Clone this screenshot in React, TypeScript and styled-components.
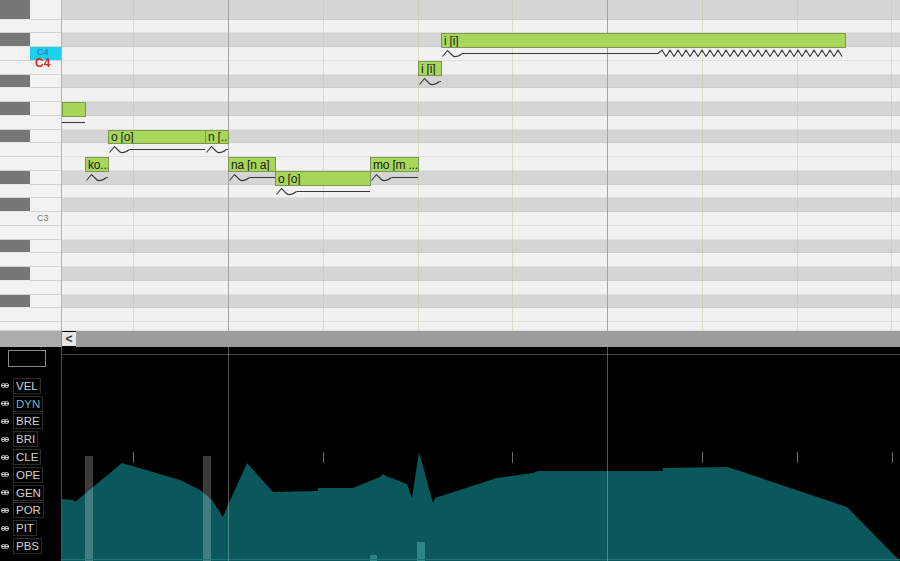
import React from "react";
import styled, { createGlobalStyle } from "styled-components";

const GlobalStyle = createGlobalStyle`
  html, body { margin: 0; padding: 0; background: #000; }
  body { font-family: "Liberation Sans", Arial, sans-serif; }
  * { box-sizing: border-box; }
`;

const PIANO_H = 331;
const KEY_W = 62;

const NAMES = [
  "D#4", "D4", "C#4", "C4", "B3", "A#3", "A3", "G#3", "G3", "F#3", "F3", "E3",
  "D#3", "D3", "C#3", "C3", "B2", "A#2", "A2", "G#2", "G2", "F#2", "F2", "E2",
];

type Row = { name: string; black: boolean; top: number; h: number };

const ROWS: Row[] = NAMES.map((name, i) => {
  const top = i === 0 ? 0 : Math.floor(20 + (i - 1) * 13.75);
  const next = Math.min(PIANO_H, Math.floor(20 + i * 13.75));
  return { name, black: name.includes("#"), top, h: next - top };
});
const rowOf = (n: string) => ROWS.find((r) => r.name === n)!;

type NoteDef = { x: number; w: number; row: string; text: string; squiggle: boolean; lineEnd?: number; vib?: [number, number] };

const NOTES: NoteDef[] = [
  { x: 62, w: 23, row: "G#3", text: "", squiggle: false },
  { x: 85, w: 23, row: "E3", text: "ko...", squiggle: true },
  { x: 108, w: 97, row: "F#3", text: "o [o]", squiggle: true },
  { x: 205, w: 23, row: "F#3", text: "n [...", squiggle: true },
  { x: 228, w: 47, row: "E3", text: "na [n a]", squiggle: true },
  { x: 275, w: 95, row: "D#3", text: "o [o]", squiggle: true },
  { x: 370, w: 48, row: "E3", text: "mo [m ...", squiggle: true },
  { x: 418, w: 23, row: "B3", text: "i [i]", squiggle: true },
  { x: 441, w: 404, row: "C#4", text: "i [i]", squiggle: true, lineEnd: 658, vib: [658, 843] },
];

const BAR_LINES = [228, 607];
const BEAT_LINES = [133, 323, 418, 512, 702, 797, 891];
const TICKS = [133, 323, 512, 702, 797, 892];

const PARAMS = ["VEL", "DYN", "BRE", "BRI", "CLE", "OPE", "GEN", "POR", "PIT", "PBS"];

const CURVE: [number, number][] = [
  [62, 499], [73, 500], [75, 502], [122, 463], [180, 480], [200, 490], [212, 500], [223, 517],
  [228, 505], [247, 463], [273, 492], [318, 491], [318, 488], [353, 488], [380, 477], [383, 474],
  [386, 476], [407, 484], [412, 498], [419, 452], [433, 503], [435, 498], [497, 478], [533, 473],
  [538, 471], [663, 471], [663, 468], [727, 467], [743, 472], [847, 507], [900, 561],
];

/* ---------- layout ---------- */

const Screen = styled.div`
  width: 900px;
  height: 561px;
  overflow: hidden;
  display: flex;
  flex-direction: column;
  background: #000;
`;

const PianoRoll = styled.div`
  height: ${PIANO_H}px;
  display: flex;
  flex-shrink: 0;
  overflow: hidden;
`;

const Keyboard = styled.div`
  width: ${KEY_W}px;
  position: relative;
  display: flex;
  flex-direction: column;
  border-right: 1px solid #b4b4b4;
  background: #f2f2f2;
`;

const KeyRow = styled.div<{ $h: number }>`
  height: ${(p) => p.$h}px;
  display: flex;
  flex-shrink: 0;
`;

const BlackPart = styled.div<{ $black: boolean }>`
  width: 30px;
  background: ${(p) => (p.$black ? "#777777" : "#f2f2f2")};
  border-bottom: 1px solid ${(p) => (p.$black ? "#e8e8e8" : "#d2d2d2")};
`;

const WhitePart = styled.div<{ $hl?: boolean }>`
  flex: 1;
  background: ${(p) => (p.$hl ? "#1ccfec" : "#f2f2f2")};
  border-bottom: 1px solid #d2d2d2;
  display: flex;
  align-items: ${(p) => (p.$hl ? "flex-start" : "center")};
  padding-left: 7px;
  padding-top: ${(p) => (p.$hl ? "1px" : "0")};
  font-size: 9px;
  color: ${(p) => (p.$hl ? "#1d73b0" : "#7a7a7a")};
  line-height: 1;
`;

const CurrentNote = styled.div`
  position: absolute;
  left: 35px;
  top: 57px;
  font-size: 12px;
  font-weight: bold;
  color: #d42a2a;
  line-height: 1;
`;

const Grid = styled.div`
  flex: 1;
  position: relative;
  display: flex;
  flex-direction: column;
`;

const GridRow = styled.div<{ $h: number; $black: boolean }>`
  height: ${(p) => p.$h}px;
  flex-shrink: 0;
  background: ${(p) => (p.$black ? "#d5d5d5" : "#f1f1f1")};
  border-bottom: 1px solid ${(p) => (p.$black ? "#cdcdcd" : "#e0e0e0")};
`;

const VLine = styled.div<{ $bar: boolean }>`
  position: absolute;
  top: 0;
  bottom: 0;
  width: 1px;
  background: ${(p) => (p.$bar ? "#a4a4a4" : "rgba(200, 196, 140, 0.45)")};
`;

const Note = styled.div`
  position: absolute;
  background: #a8d65b;
  border: 1px solid #7c984f;
  font-size: 12px;
  letter-spacing: -0.2px;
  line-height: 1;
  color: #1a1a1a;
  padding-left: 2px;
  display: flex;
  align-items: center;
  white-space: nowrap;
  overflow: hidden;
`;

const Overlay = styled.svg`
  position: absolute;
  left: 0;
  top: 0;
  pointer-events: none;
`;

const ScrollRow = styled.div`
  height: 16px;
  flex-shrink: 0;
  display: flex;
`;

const ScrollCorner = styled.div`
  width: ${KEY_W}px;
  background: #acacac;
  border-right: 1px solid #8a8a8a;
`;

const ScrollButton = styled.div`
  width: 14px;
  margin: 1px 0;
  background: #e6e6e6;
  color: #333;
  font-size: 12px;
  font-weight: bold;
  display: flex;
  align-items: center;
  justify-content: center;
  line-height: 1;
`;

const ScrollTrack = styled.div`
  flex: 1;
  background: #9c9c9c;
`;

const ControlPanel = styled.div`
  flex: 1;
  display: flex;
  min-height: 0;
`;

const Sidebar = styled.div`
  width: ${KEY_W}px;
  border-right: 1px solid #4e4e4e;
  padding-top: 3px;
  display: flex;
  flex-direction: column;
`;

const ValueBox = styled.div`
  margin-left: 8px;
  width: 38px;
  height: 17px;
  border: 1px solid #8a8a8a;
`;

const ParamList = styled.div`
  margin-top: 10px;
  display: flex;
  flex-direction: column;
`;

const ParamRow = styled.div`
  height: 17.8px;
  display: flex;
  align-items: center;
`;

const ParamLabel = styled.div<{ $active?: boolean }>`
  margin-left: 4px;
  height: 16px;
  padding: 0 2px;
  border: 1px solid #2c2c2c;
  font-size: 11.5px;
  line-height: 14px;
  color: ${(p) => (p.$active ? "#62b8c8" : "#d2d2d2")};
`;

const Graph = styled.div`
  flex: 1;
  position: relative;
`;

/* ---------- drawings ---------- */

const EyeIcon = () => (
  <svg width="8" height="7" viewBox="0 0 8 7" style={{ marginLeft: 1 }}>
    <circle cx="2.4" cy="3.5" r="2" fill="none" stroke="#c8c8c8" strokeWidth="1" />
    <circle cx="5.6" cy="3.5" r="2" fill="none" stroke="#c8c8c8" strokeWidth="1" />
    <line x1="0" y1="3.5" x2="8" y2="3.5" stroke="#c8c8c8" strokeWidth="1" />
  </svg>
);

const squiggle = (x0: number, L: number) =>
  `M${x0},${L + 3} L${x0 + 5},${L - 3} L${x0 + 10},${L + 2} Q${x0 + 13},${L + 5} ${x0 + 20},${L}`;

const vibrato = (a: number, b: number, L: number) => {
  let d = `M${a},${L}`;
  let up = true;
  for (let x = a + 4; x <= b; x += 4) {
    d += ` L${x},${up ? L - 3.5 : L + 3}`;
    up = !up;
  }
  return d;
};

const PitchCurves = () => {
  const paths: string[] = [];
  NOTES.forEach((n) => {
    const r = rowOf(n.row);
    const L = r.top + r.h + 6.5;
    const x = n.x - KEY_W;
    if (!n.squiggle) {
      paths.push(`M${x},${L} L${x + n.w},${L}`);
      return;
    }
    const sx = x + 1.5;
    paths.push(squiggle(sx, L));
    const end = (n.lineEnd ?? n.x + n.w) - KEY_W;
    if (end > sx + 20) paths.push(`M${sx + 20},${L} L${end},${L}`);
    if (n.vib) paths.push(vibrato(n.vib[0] - KEY_W, n.vib[1] - KEY_W, L));
  });
  return (
    <Overlay width={900 - KEY_W} height={PIANO_H}>
      {paths.map((d, i) => (
        <path key={i} d={d} fill="none" stroke="#3a3a3a" strokeWidth="1.1" />
      ))}
    </Overlay>
  );
};

const DynamicsChart = () => {
  const off = (x: number) => x - KEY_W;
  const oy = (y: number) => y - 347;
  const pts = [
    `${off(62)},${oy(561)}`,
    ...CURVE.map(([x, y]) => `${off(x)},${oy(y)}`),
    `${off(900)},${oy(561)}`,
  ].join(" ");
  const W = 900 - KEY_W;
  return (
    <svg width={W} height={214} style={{ display: "block" }}>
      <line x1="0" y1="7.5" x2={W} y2="7.5" stroke="#444" strokeWidth="1" />
      {TICKS.map((x) => (
        <line key={x} x1={off(x) + 0.5} y1={oy(452)} x2={off(x) + 0.5} y2={oy(463)} stroke="#6a6a6a" strokeWidth="1" />
      ))}
      <polygon points={pts} fill="#0a585c" />
      <rect x={off(85)} y={oy(456)} width="8" height="110" fill="rgba(255,255,255,0.23)" />
      <rect x={off(203)} y={oy(456)} width="8" height="110" fill="rgba(255,255,255,0.23)" />
      <rect x={off(370)} y={oy(555)} width="7" height="8" fill="#2f8588" />
      <rect x={off(417)} y={oy(542)} width="8" height="20" fill="#2f8588" />
      <rect x="0" y={oy(559)} width={W} height="1" fill="#1f7478" />
      {BAR_LINES.map((x) => (
        <line key={x} x1={off(x) + 0.5} y1="0" x2={off(x) + 0.5} y2="214" stroke="rgba(190,190,190,0.45)" strokeWidth="1" />
      ))}
    </svg>
  );
};

export default function App() {
  return (
    <>
      <GlobalStyle />
      <Screen>
        <PianoRoll>
          <Keyboard>
            {ROWS.map((r) => (
              <KeyRow key={r.name} $h={r.h}>
                <BlackPart $black={r.black} />
                <WhitePart $hl={r.name === "C4"}>
                  {r.name === "C4" ? "C4" : r.name === "C3" ? "C3" : ""}
                </WhitePart>
              </KeyRow>
            ))}
            <CurrentNote>C4</CurrentNote>
          </Keyboard>
          <Grid>
            {ROWS.map((r) => (
              <GridRow key={r.name} $h={r.h} $black={r.black} />
            ))}
            {BEAT_LINES.map((x) => (
              <VLine key={x} $bar={false} style={{ left: x - KEY_W }} />
            ))}
            {BAR_LINES.map((x) => (
              <VLine key={x} $bar style={{ left: x - KEY_W }} />
            ))}
            <PitchCurves />
            {NOTES.map((n, i) => {
              const r = rowOf(n.row);
              return (
                <Note key={i} style={{ left: n.x - KEY_W, top: r.top, width: n.w + 1, height: r.h + 1 }}>
                  {n.text}
                </Note>
              );
            })}
          </Grid>
        </PianoRoll>
        <ScrollRow>
          <ScrollCorner />
          <ScrollButton>&lt;</ScrollButton>
          <ScrollTrack />
        </ScrollRow>
        <ControlPanel>
          <Sidebar>
            <ValueBox />
            <ParamList>
              {PARAMS.map((p) => (
                <ParamRow key={p}>
                  <EyeIcon />
                  <ParamLabel $active={p === "DYN"}>{p}</ParamLabel>
                </ParamRow>
              ))}
            </ParamList>
          </Sidebar>
          <Graph>
            <DynamicsChart />
          </Graph>
        </ControlPanel>
      </Screen>
    </>
  );
}
